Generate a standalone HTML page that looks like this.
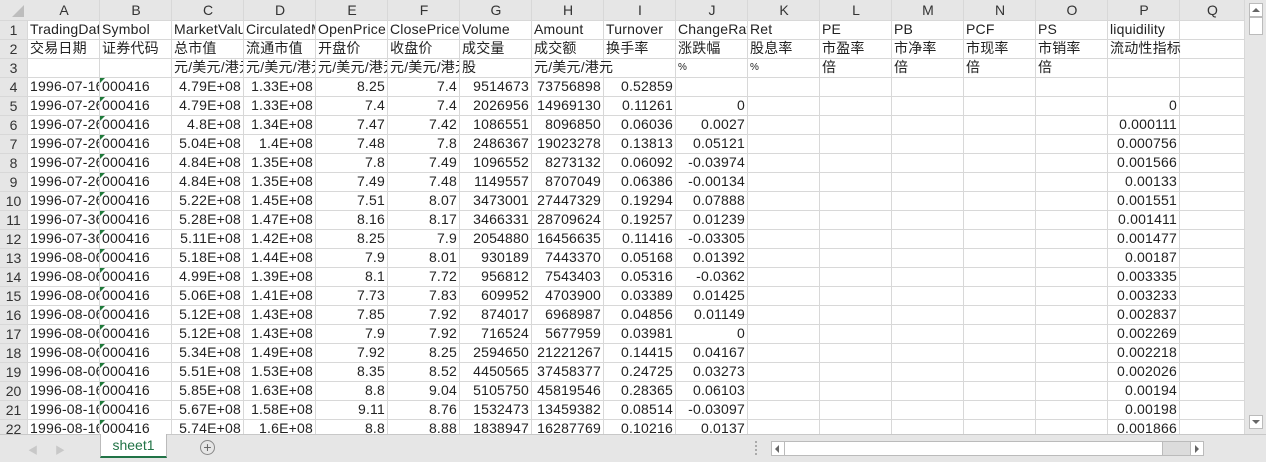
<!DOCTYPE html>
<html><head><meta charset="utf-8"><style>
*{margin:0;padding:0;box-sizing:border-box}
body{width:1266px;height:462px;overflow:hidden;background:#fff;font-family:"Liberation Sans","Noto Sans CJK SC",sans-serif;font-size:14px;color:#222;position:relative}
.c{position:absolute;height:19px;line-height:19px;white-space:nowrap;overflow:hidden;padding:0 2px;letter-spacing:0.2px}
.r{text-align:right}
.h{position:absolute;background:#e6e6e6;color:#333;text-align:center;font-size:14px;line-height:20px}
.vl{position:absolute;width:1px;background:#d8d8d8}
.hl{position:absolute;height:1px;background:#d8d8d8}
.tri{position:absolute;width:0;height:0;border-top:5px solid #1f7a3a;border-right:5px solid transparent}
</style></head><body>
<div id="g"></div>
<script>
var cols=[28,100,172,244,316,388,460,532,604,676,748,820,892,964,1036,1108,1180,1245];
var L="ABCDEFGHIJKLMNOPQ";
var H='';
var top0=21,rh=19;
H+='<div class="h" style="left:0;top:0;width:1245px;height:20px"></div>';
H+='<div class="h" style="left:0;top:0;width:28px;height:434px"></div>';
for(var i=0;i<17;i++)H+='<div class="h" style="left:'+cols[i]+'px;top:0;width:'+(cols[i+1]-cols[i])+'px;height:20px">'+L[i]+'</div>';
for(var r=1;r<=22;r++)H+='<div class="h" style="left:0;top:'+(top0+(r-1)*rh)+'px;width:27px;height:19px;line-height:19px;font-size:14px">'+r+'</div>';
for(var i=0;i<cols.length;i++)H+='<div class="vl" style="left:'+(cols[i]-1)+'px;top:0;height:434px"></div>';
for(var r=0;r<=22;r++)H+='<div class="hl" style="left:0;top:'+(top0-1+r*rh)+'px;width:1245px"></div>';
H+='<div style="position:absolute;left:0;top:0;width:28px;height:20px;background:#e6e6e6"></div><div style="position:absolute;left:12px;top:5px;width:0;height:0;border-bottom:12px solid #bdbdbd;border-left:12px solid transparent"></div>';
var data={};
function set(r,c,v){data[r+','+c]=v;}
var r1=["TradingDate","Symbol","MarketValue","CirculatedMarketValue","OpenPrice","ClosePrice","Volume","Amount","Turnover","ChangeRatio","Ret","PE","PB","PCF","PS","liquidility"];
var r2=["交易日期","证券代码","总市值","流通市值","开盘价","收盘价","成交量","成交额","换手率","涨跌幅","股息率","市盈率","市净率","市现率","市销率","流动性指标"];
for(var i=0;i<16;i++){set(1,i,r1[i]);set(2,i,r2[i]);}
var r3={2:"元/美元/港元",3:"元/美元/港元",4:"元/美元/港元",5:"元/美元/港元",6:"股",7:"元/美元/港元",9:"%",10:"%",11:"倍",12:"倍",13:"倍",14:"倍"};
for(var k in r3)set(3,+k,r3[k]);
var d="1,2,2,2,2,2,2,3,3,0,0,0,0,0,0,0,1,1,1".split(",");
var mo="07,07,07,07,07,07,07,07,07,08,08,08,08,08,08,08,08,08,08".split(",");
var C="4.79E+08,4.79E+08,4.8E+08,5.04E+08,4.84E+08,4.84E+08,5.22E+08,5.28E+08,5.11E+08,5.18E+08,4.99E+08,5.06E+08,5.12E+08,5.12E+08,5.34E+08,5.51E+08,5.85E+08,5.67E+08,5.74E+08".split(",");
var D="1.33E+08,1.33E+08,1.34E+08,1.4E+08,1.35E+08,1.35E+08,1.45E+08,1.47E+08,1.42E+08,1.44E+08,1.39E+08,1.41E+08,1.43E+08,1.43E+08,1.49E+08,1.53E+08,1.63E+08,1.58E+08,1.6E+08".split(",");
var E="8.25,7.4,7.47,7.48,7.8,7.49,7.51,8.16,8.25,7.9,8.1,7.73,7.85,7.9,7.92,8.35,8.8,9.11,8.8".split(",");
var F="7.4,7.4,7.42,7.8,7.49,7.48,8.07,8.17,7.9,8.01,7.72,7.83,7.92,7.92,8.25,8.52,9.04,8.76,8.88".split(",");
var G="9514673,2026956,1086551,2486367,1096552,1149557,3473001,3466331,2054880,930189,956812,609952,874017,716524,2594650,4450565,5105750,1532473,1838947".split(",");
var Hh="73756898,14969130,8096850,19023278,8273132,8707049,27447329,28709624,16456635,7443370,7543403,4703900,6968987,5677959,21221267,37458377,45819546,13459382,16287769".split(",");
var I="0.52859,0.11261,0.06036,0.13813,0.06092,0.06386,0.19294,0.19257,0.11416,0.05168,0.05316,0.03389,0.04856,0.03981,0.14415,0.24725,0.28365,0.08514,0.10216".split(",");
var J=",0,0.0027,0.05121,-0.03974,-0.00134,0.07888,0.01239,-0.03305,0.01392,-0.0362,0.01425,0.01149,0,0.04167,0.03273,0.06103,-0.03097,0.0137".split(",");
var P=",0,0.000111,0.000756,0.001566,0.00133,0.001551,0.001411,0.001477,0.00187,0.003335,0.003233,0.002837,0.002269,0.002218,0.002026,0.00194,0.00198,0.001866".split(",");
for(var k=0;k<19;k++){var r=k+4;
set(r,0,"1996-"+mo[k]+"-"+d[k]+"6");set(r,1,"000416");
var nums=[[2,C],[3,D],[4,E],[5,F],[6,G],[7,Hh],[8,I],[9,J],[15,P]];
nums.forEach(function(n){if(n[1][k]!=="")data[r+','+n[0]]={n:n[1][k]};});}
for(var r=1;r<=22;r++)for(var c=0;c<17;c++){var v=data[r+','+c];if(v===undefined)continue;
var y=top0+(r-1)*rh-1;
if(typeof v==='object'){H+='<div class="c r" style="left:'+cols[c]+'px;top:'+y+'px;width:'+(cols[c+1]-cols[c]-1)+'px">'+v.n+'</div>';}
else{var e=c+1;while(e<17&&data[r+','+e]===undefined)e++;
var fs=(r==3&&(c==9||c==10))?'font-size:10px;':'';
H+='<div class="c" style="'+fs+'left:'+cols[c]+'px;top:'+y+'px;width:'+(cols[e]-cols[c]-1)+'px">'+v+'</div>';}
if(r>=4&&c==1)H+='<div class="tri" style="left:'+cols[1]+'px;top:'+(y+1)+'px"></div>';}
H+='<div style="position:absolute;left:1245px;top:0;width:21px;height:434px;background:#e6e6e6"></div>';
H+='<div style="position:absolute;left:1249px;top:3px;width:14px;height:14px;background:#fff;border:1px solid #bbb"></div><div style="position:absolute;left:1252px;top:8px;border-bottom:4px solid #666;border-left:4px solid transparent;border-right:4px solid transparent"></div>';
H+='<div style="position:absolute;left:1249px;top:17px;width:14px;height:18px;background:#fff;border:1px solid #bbb"></div>';
H+='<div style="position:absolute;left:1249px;top:415px;width:14px;height:14px;background:#fff;border:1px solid #bbb"></div><div style="position:absolute;left:1252px;top:420px;border-top:4px solid #666;border-left:4px solid transparent;border-right:4px solid transparent"></div>';
H+='<div style="position:absolute;left:0;top:434px;width:1266px;height:28px;background:#e6e6e6;border-top:1px solid #c8c8c8"></div>';
H+='<div style="position:absolute;left:28px;top:442px;color:#c8c8c8;font-size:10px">◀</div><div style="position:absolute;left:55px;top:442px;color:#c8c8c8;font-size:10px">▶</div>';
H+='<div style="position:absolute;left:100px;top:434px;width:67px;height:24px;background:#fff;border-left:1px solid #bbb;border-right:1px solid #bbb;border-bottom:2px solid #217346;color:#217346;text-align:center;line-height:22px;font-size:14px">sheet1</div>';
H+='<div style="position:absolute;left:200px;top:440px;width:15px;height:15px;border:1px solid #888;border-radius:50%;color:#666;text-align:center;line-height:12px;font-size:14px">+</div>';
H+='<div style="position:absolute;left:755px;top:441px;width:2px;height:14px;border-left:2px dotted #aaa"></div>';
H+='<div style="position:absolute;left:771px;top:441px;width:433px;height:15px;background:#dcdcdc;border:1px solid #bbb"></div>';
H+='<div style="position:absolute;left:784px;top:442px;width:379px;height:13px;background:#fff;border-left:1px solid #bbb;border-right:1px solid #bbb"></div>';
H+='<div style="position:absolute;left:772px;top:442px;width:12px;height:13px;background:#fff"></div><div style="position:absolute;left:775px;top:445px;border-right:4px solid #666;border-top:4px solid transparent;border-bottom:4px solid transparent"></div>';
H+='<div style="position:absolute;left:1190px;top:442px;width:13px;height:13px;background:#fff;border-left:1px solid #bbb"></div><div style="position:absolute;left:1195px;top:445px;border-left:4px solid #666;border-top:4px solid transparent;border-bottom:4px solid transparent"></div>';
document.getElementById('g').innerHTML=H;
</script>
</body></html>
